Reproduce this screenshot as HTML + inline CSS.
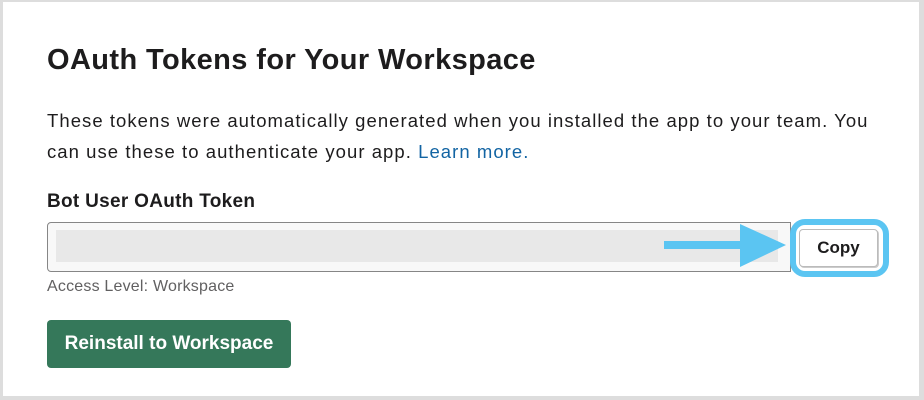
<!DOCTYPE html>
<html><head><style>
*{margin:0;padding:0;box-sizing:border-box}
body{width:924px;height:400px;background:#fff;font-family:"Liberation Sans",sans-serif;color:#1d1c1d;position:relative;overflow:hidden}
.frame{position:absolute;left:0;top:0;width:924px;height:400px;border-top:2px solid #ddd;border-left:3px solid #ddd;border-right:5px solid #ddd;border-bottom:4px solid #ddd}
h1{position:absolute;left:47px;top:44px;font-size:29px;font-weight:bold;letter-spacing:0.4px}
p{position:absolute;left:47px;top:105px;width:880px;font-size:18.5px;line-height:31px;letter-spacing:1.05px}
a{color:#1264a3;text-decoration:none}
.lbl{position:absolute;left:47px;top:191px;font-size:19px;font-weight:bold;letter-spacing:0.3px}
.inp{position:absolute;left:47px;top:222px;width:744px;height:50px;border:1px solid #868686;border-radius:4px 0 0 4px;background:#f8f8f8}
.bar{position:absolute;left:56px;top:230px;width:722px;height:32px;background:#e8e8e8}
.ring{position:absolute;left:790px;top:219px;width:99px;height:58px;border:6px solid #5bc5f2;border-radius:15px;background:#fff}
.copy{position:absolute;left:799px;top:229px;width:79px;height:38px;border:1px solid #bbb;border-radius:4px;background:#fff;font-size:17px;font-weight:bold;text-align:center;line-height:36px;box-shadow:1px 1px 0 #ccc}
.acc{position:absolute;left:47px;top:278px;font-size:16px;color:#616061;letter-spacing:0.2px}
.btn{position:absolute;left:47px;top:320px;width:244px;height:48px;background:#35785a;border-radius:4px;color:#fff;font-weight:bold;font-size:19px;text-align:center;line-height:48px}
</style></head><body>
<div class="frame"></div>
<h1>OAuth Tokens for Your Workspace</h1>
<p>These tokens were automatically generated when you installed the app to your team. You<br>can use these to authenticate your app. <a>Learn more.</a></p>
<div class="lbl">Bot User OAuth Token</div>
<div class="inp"></div>
<div class="bar"></div>
<svg style="position:absolute;left:660px;top:220px" width="130" height="50"><rect x="4" y="21" width="84" height="8" fill="#5bc5f2"/><polygon points="80,4 126,25 80,47" fill="#5bc5f2"/></svg>
<div class="ring"></div>
<div class="copy">Copy</div>
<div class="acc">Access Level: Workspace</div>
<div class="btn">Reinstall to Workspace</div>
</body></html>
